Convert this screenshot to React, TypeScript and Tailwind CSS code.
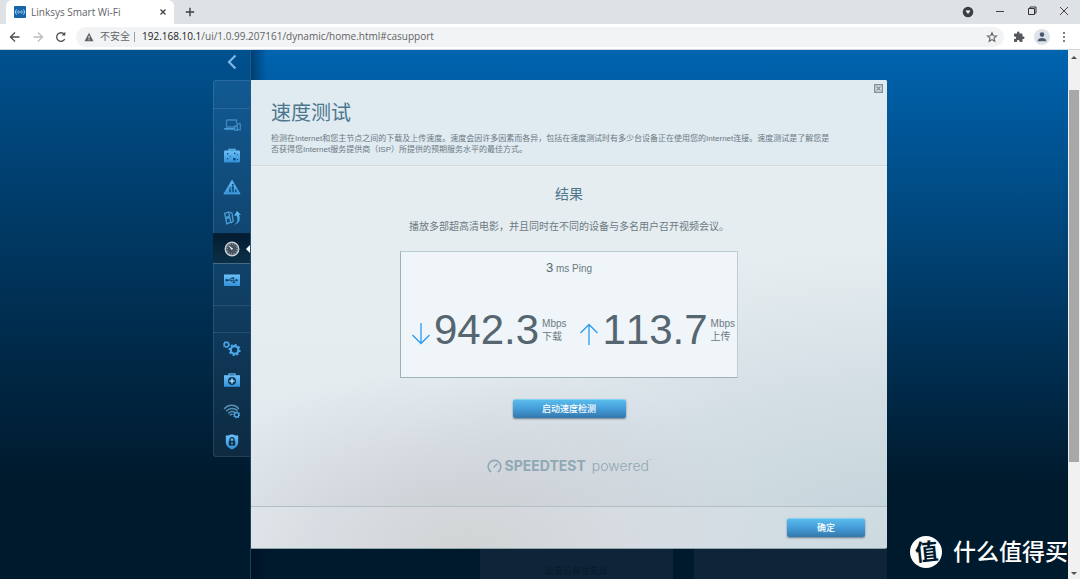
import type { ReactNode } from "react";

const cjk = "font-['Liberation_Sans','Noto_Sans_CJK_SC',sans-serif]";
const chromeFont = "font-['Open_Sans','Noto_Sans_CJK_SC',sans-serif]";

function Icon({ children }: { children: ReactNode }) {
  return (
    <svg
      viewBox="0 0 18 18"
      className="size-[18px] overflow-visible"
      fill="url(#iconBlue)"
      aria-hidden="true"
    >
      {children}
    </svg>
  );
}

function Gear({ cx, cy, r }: { cx: number; cy: number; r: number }) {
  return (
    <g fill="none" stroke="#4ba8e8">
      <circle cx={cx} cy={cy} r={r} strokeWidth={r * 0.6} />
      <circle
        cx={cx}
        cy={cy}
        r={r * 1.35}
        strokeWidth={r * 0.5}
        pathLength={16}
        strokeDasharray="1 1"
      />
    </g>
  );
}

const icons = {
  devices: (
    <Icon>
      <path
        d="M3.5 4h10v3M3.5 4v7H12"
        fill="none"
        stroke="#3f86bd"
        strokeWidth="1.4"
      />
      <path d="M.5 12h11v1.8H1.800z" fill="#4d9bd6" />
      <rect x="11.8" y="10" width="2.6" height="4.2" fill="#0e5289" stroke="#4d9bd6" />
      <rect x="14.2" y="7.8" width="3" height="6" fill="#0e5289" stroke="#4d9bd6" />
    </Icon>
  ),
  guest: (
    <Icon>
      <path d="M6 4V2.5h6V4" fill="none" stroke="#58b2ee" strokeWidth="1.4" />
      <rect x="1" y="3.6" width="16" height="11.8" rx="1" />
      <g fill="#0d4878">
        <rect x="4" y="6" width="1.4" height="1.4" />
        <rect x="6.6" y="8.8" width="1" height="1" />
        <rect x="11" y="5.6" width="1.4" height="1.4" />
        <rect x="13.8" y="7.2" width="1" height="1" />
        <rect x="4" y="11" width="1.2" height="1.2" />
        <rect x="10.2" y="11" width="2.4" height="2.4" />
        <rect x="14" y="12" width="1" height="1" />
      </g>
    </Icon>
  ),
  parental: (
    <Icon>
      <path d="M9 2l8.2 14H.8z" stroke="#58b2ee" strokeLinejoin="round" strokeWidth=".6" />
      <g fill="#0d4878">
        <circle cx="9.8" cy="6.8" r="1" />
        <path d="M8.8 8.2h2v6h-.8v-3h-.4v3h-.8z" />
        <circle cx="7" cy="9.8" r=".8" />
        <path d="M6.2 11h1.5v3.2H6.2zM12 11.4h1.4v2.8H12z" />
      </g>
    </Icon>
  ),
  priority: (
    <Icon>
      <g fill="none" stroke="#4d9fd8" strokeWidth="1.3">
        <path d="M1.6 4.4l4-1.4 1 4.2-4 1.4zM2.8 10l4-1.4 1 4.6-4 1.6z" />
        <path d="M6.4 3l2.6 1.2 1.2 8L7.8 14" />
      </g>
      <path d="M10.4 15.800c5-1.800 4.200-6 3.400-9.200l-2.800.4L14 2l4 4-2-.2c1.600 4.800 1 9-5.600 10z" />
    </Icon>
  ),
  speed: (
    <Icon>
      <circle cx="9" cy="9" r="6.7" fill="#46535e" stroke="#c9d0d4" strokeWidth="1.5" />
      <circle
        cx="9"
        cy="9"
        r="4.8"
        fill="none"
        stroke="#c9d0d4"
        strokeWidth="1"
        pathLength={24}
        strokeDasharray=".6 1.4"
      />
      <path d="M5.2 5l4.800 3.800-1.200 1.200z" fill="#fff" />
    </Icon>
  ),
  usb: (
    <Icon>
      <rect x="1" y="3.5" width="16" height="11.5" />
      <g stroke="#0d3c63" strokeWidth=".9" fill="none">
        <path d="M3.5 9.2h10M6 9.2l2-2h2M7.5 9.2l2 2h1.8" />
      </g>
      <g fill="#0d3c63">
        <circle cx="3.8" cy="9.2" r="1.2" />
        <path d="M13 7.8l2.4 1.4L13 10.6z" />
        <circle cx="10.4" cy="7.2" r=".9" />
        <rect x="10.6" y="10.4" width="1.6" height="1.6" />
      </g>
    </Icon>
  ),
  connectivity: (
    <Icon>
      <Gear cx={3.4} cy={4.6} r={2.2} />
      <Gear cx={11.6} cy={10} r={3.8} />
    </Icon>
  ),
  troubleshooting: (
    <Icon>
      <path d="M6 4.5V2.8h6v1.700" fill="none" stroke="#58b2ee" strokeWidth="1.3" />
      <path d="M1 4.2h16v11.600H1z" />
      <circle cx="9" cy="10" r="4" fill="#0f3a5c" />
      <path d="M8.2 7.5h1.6v1.7h1.7v1.6H9.8v1.7H8.2v-1.7H6.5V9.2h1.7z" fill="#a5dcff" />
    </Icon>
  ),
  wireless: (
    <Icon>
      <g fill="none" stroke="#5790b5" strokeWidth="1.5" strokeLinecap="round">
        <path d="M1.5 6.4c4-4.2 10.5-4.2 14 0M3.6 8.8c3-3 7.5-3 10.4-.6M5.7 11c1.7-1.7 4-1.8 5.6-1" />
        <path d="M7.4 12.8l1.6-.6" />
      </g>
      <Gear cx={13.6} cy={12.8} r={2.2} />
    </Icon>
  ),
  security: (
    <Icon>
      <path d="M2.8 2.500c4 .2 4-1 6.2-1s2.2 1.2 6.2 1v6.500c0 4-3 6-6.2 7.500C5.800 15 2.8 13 2.8 9z" />
      <path d="M7 8V6.6a2 2 0 014 0V8" fill="none" stroke="#0f304b" strokeWidth="1.2" />
      <rect x="5.8" y="7.8" width="6.4" height="4.800" fill="#0f304b" />
      <rect x="8.4" y="9.2" width="1.2" height="2" fill="#6fbdf0" />
    </Icon>
  ),
};

const appItems = [
  { label: "设备列表", icon: icons.devices },
  { label: "访客网络", icon: icons.guest },
  { label: "家长控制", icon: icons.parental },
  { label: "设备优先级", icon: icons.priority },
  { label: "速度测试", icon: icons.speed, active: true },
  { label: "外部存储", icon: icons.usb },
];

const settingItems = [
  { label: "连接", icon: icons.connectivity },
  { label: "故障排除", icon: icons.troubleshooting },
  { label: "无线", icon: icons.wireless },
  { label: "安全", icon: icons.security },
];

function NavButton({ label, icon, active }: { label: string; icon: ReactNode; active?: boolean }) {
  return (
    <button
      aria-label={label}
      className={
        active
          ? "relative flex h-[31px] w-full items-center justify-center border-y border-t-[#03233d] border-b-[#456b86] bg-linear-to-b from-[#041c30] to-[#0b3048]"
          : "flex h-[31px] w-full items-center justify-center"
      }
    >
      {icon}
      {active && (
        <span className="absolute right-0 border-y-4 border-r-4 border-y-transparent border-r-white" />
      )}
    </button>
  );
}

function Sidebar() {
  return (
    <aside className="flex w-[251px] shrink-0 flex-col items-end border-r border-[#2b618a]/60 bg-linear-to-b from-[#00518f] to-[#001a2d] to-[430px]">
      <button aria-label="返回" className="flex h-[30px] w-[37px] items-center justify-center pb-[6px]">
        <svg viewBox="0 0 10 16" className="h-4 w-2.5" fill="none">
          <path d="M8.5 1.5L2 8l6.5 6.5" stroke="#7cb9e8" strokeWidth="2.2" />
        </svg>
      </button>
      <nav className="w-[37px] rounded-l-sm bg-linear-to-b from-[#115a93] to-[#0d2a41] shadow-[inset_1px_0_0_rgba(255,255,255,0.1),inset_0_1px_0_rgba(255,255,255,0.1),inset_0_-1px_0_rgba(255,255,255,0.1)]">
        <div className="h-[29px] border-b border-white/10" />
        <div className="border-b border-white/10 pb-[10px]">
          {appItems.map((item) => (
            <NavButton key={item.label} {...item} />
          ))}
        </div>
        <div className="h-[27px] border-b border-white/10" />
        {settingItems.map((item) => (
          <NavButton key={item.label} {...item} />
        ))}
      </nav>
    </aside>
  );
}

function BrowserChrome() {
  return (
    <header className={`${chromeFont} text-[10px] text-[#5f6368]`}>
      <div className="flex h-6 items-center bg-[#dee1e6] pl-[6px]">
        <div className="flex h-full w-[168px] items-center rounded-t-md bg-white pr-[7px] pl-2">
          <svg viewBox="0 0 12 12" className="size-3">
            <rect width="12" height="12" rx="1" fill="#1766ab" />
            <g stroke="#bfe3ff" fill="none">
              <path d="M2.5 3.5C1.3 5 1.3 7 2.5 8.5M4.5 4.5c-.8 1-.8 2 0 3M7.5 4.5c.8 1 .8 2 0 3M9.5 3.5c1.2 1.5 1.2 3.5 0 5" />
            </g>
            <circle cx="6" cy="6" r=".8" fill="#bfe3ff" />
          </svg>
          <span className="ml-[5px] flex-1 whitespace-nowrap">Linksys Smart Wi-Fi</span>
          <button aria-label="关闭标签页">
            <svg viewBox="0 0 8 8" className="size-2" stroke="#3c4043" strokeWidth="1.3">
              <path d="M1.500 1.500l5 5M6.500 1.500l-5 5" />
            </svg>
          </button>
        </div>
        <button aria-label="新标签页" className="ml-[11px]">
          <svg viewBox="0 0 10 10" className="size-[10px]" stroke="#3c4043" strokeWidth="1.4">
            <path d="M5 .8v8.400M.8 5h8.400" />
          </svg>
        </button>
        <div className="ml-auto flex items-center gap-5 pr-[10px]">
          <button aria-label="搜索标签页">
            <svg viewBox="0 0 12 12" className="size-3">
              <circle cx="6" cy="6" r="5.3" fill="#3c4043" />
              <path d="M3.5 4.5h5L6 8z" fill="#fff" />
            </svg>
          </button>
          <button aria-label="最小化" className="pb-[3px]">
            <svg viewBox="0 0 12 12" className="size-3" stroke="#444">
              <path d="M2 6.5h8" />
            </svg>
          </button>
          <button aria-label="还原" className="pb-[3px]">
            <svg viewBox="0 0 12 12" className="size-3" fill="none" stroke="#333">
              <path d="M2.5 3.5h6v6h-6zM4 3.500v-1.500h6v6H8.500" />
            </svg>
          </button>
          <button aria-label="关闭" className="pb-[3px]">
            <svg viewBox="0 0 12 12" className="size-3" stroke="#444">
              <path d="M2 2l8 8M10 2l-8 8" />
            </svg>
          </button>
        </div>
      </div>
      <div className="flex h-[26px] items-center border-b border-[#cfd6dc] bg-white pr-[10px] pl-[9px]">
        <button aria-label="后退">
          <svg viewBox="0 0 12 12" className="size-3" fill="none" stroke="#4b4f53" strokeWidth="1.3">
            <path d="M10.5 6h-9M6 1.5L1.5 6 6 10.5" />
          </svg>
        </button>
        <button aria-label="前进" className="ml-[11px]">
          <svg viewBox="0 0 12 12" className="size-3" fill="none" stroke="#babcbe" strokeWidth="1.3">
            <path d="M1.5 6h9M6 1.5L10.5 6 6 10.5" />
          </svg>
        </button>
        <button aria-label="重新加载" className="ml-[11px]">
          <svg viewBox="0 0 12 12" className="size-3" fill="none" stroke="#4b4f53" strokeWidth="1.3">
            <path d="M9.7 8.2A4.3 4.3 0 119.3 3.3" />
            <path d="M10.3.8v3.7H6.6z" fill="#4b4f53" stroke="none" />
          </svg>
        </button>
        <div className="ml-[9px] flex h-5 flex-1 items-center rounded-full bg-[#f1f3f4] pr-[6px] pl-2">
          <svg viewBox="0 0 10 10" className="size-[10px]">
            <path d="M5 .8l4.500 8.400h-9z" fill="#5f6368" />
            <path d="M5 3.8v2.600M5 7.200v1" stroke="#f1f3f4" />
          </svg>
          <span className="ml-[6px] whitespace-nowrap">不安全</span>
          <span className="mr-[7px] ml-1 h-[10px] w-px bg-[#9aa0a6]" />
          <label htmlFor="address" className="text-[#202124]">
            192.168.10.1
          </label>
          <input
            id="address"
            className="min-w-0 flex-1 bg-transparent outline-none"
            defaultValue="/ui/1.0.99.207161/dynamic/home.html#casupport"
          />
          <button aria-label="收藏">
            <svg viewBox="0 0 24 24" className="size-3" fill="none" stroke="#5f6368" strokeWidth="2.2">
              <path d="M12 3.500l2.500 5.900 6.500.6-4.900 4.200 1.500 6.300L12 17.200l-5.600 3.300 1.500-6.300L3 10l6.500-.6z" />
            </svg>
          </button>
        </div>
        <button aria-label="扩展程序" className="ml-[9px]">
          <svg viewBox="0 0 24 24" className="size-3" fill="#55595d">
            <path d="M20.5 11H19V7c0-1.100-.9-2-2-2h-4V3.500a2.500 2.500 0 00-5 0V5H4c-1.100 0-2 .9-2 2v3.800h1.500a2.700 2.700 0 010 5.400H2V20c0 1.100.9 2 2 2h3.800v-1.500a2.700 2.700 0 015.400 0V22H17c1.100 0 2-.9 2-2v-4h1.500a2.500 2.500 0 000-5z" />
          </svg>
        </button>
        <button aria-label="个人资料" className="ml-[9px]">
          <svg viewBox="0 0 16 16" className="size-4">
            <circle cx="8" cy="8" r="8" fill="#dde2e8" />
            <circle cx="8" cy="5.6" r="2.3" fill="#4a5a72" />
            <path d="M3.6 12.300c0-4.400 8.800-4.400 8.800 0z" fill="#4a5a72" />
          </svg>
        </button>
        <button aria-label="菜单" className="ml-2">
          <svg viewBox="0 0 12 12" className="size-3" fill="#5f6368">
            <circle cx="6" cy="2" r="1.1" />
            <circle cx="6" cy="6" r="1.1" />
            <circle cx="6" cy="10" r="1.1" />
          </svg>
        </button>
      </div>
    </header>
  );
}

function ActionButton({ children, className }: { children: ReactNode; className: string }) {
  return (
    <button
      className={`${className} h-[19px] rounded-xs border-t border-[#83d3f6] bg-linear-to-b from-[#5bbcec] via-[#439bd8] to-[#3478ac] text-[9px] leading-none font-medium text-white shadow-[0_1px_2px_rgba(40,60,80,0.6)]`}
    >
      {children}
    </button>
  );
}

function Result({ up, value, label }: { up?: boolean; value: string; label: string }) {
  return (
    <div className="flex items-center">
      <svg viewBox="0 0 18 22" className="mt-2 h-[22px] w-[18px]" fill="none" stroke="#2a9bf0" strokeWidth="1.3">
        {up ? <path d="M9 22V1.500M.5 10L9 1.500l8.500 8.500" /> : <path d="M9 0v20.500M.5 12L9 20.500l8.500-8.500" />}
      </svg>
      <span className="ml-1 text-[42px] leading-[42px] text-[#566670] [font-kerning:none]">{value}</span>
      <span className="ml-[3px] text-[10px] leading-[13px] whitespace-nowrap">
        Mbps
        <br />
        {label}
      </span>
    </div>
  );
}

function SpeedTestDialog() {
  return (
    <section
      role="dialog"
      aria-labelledby="dialog-title"
      className="w-full max-w-[636px] overflow-hidden rounded-r-xs border-b border-[#8fa3ab] bg-[radial-gradient(ellipse_320px_180px_at_34%_100%,#c9cdce_0%,rgba(205,210,216,0.75)_45%,rgba(215,222,230,0)_100%),radial-gradient(ellipse_520px_300px_at_100%_100%,#c3d4da_0%,rgba(206,218,225,0.8)_50%,rgba(220,228,234,0)_100%),linear-gradient(to_bottom,#e6edf0_50%,#e1e8ee)] text-[#6b7983]"
    >
      <header className="relative border-b border-[#d0dade] bg-[#dfeaf1] pt-[22px] pb-[10px] pl-5">
        <h1 id="dialog-title" className="text-[20px] leading-[22px] text-[#4d778d]">
          速度测试
        </h1>
        <p className="mt-[9px] text-[8px] leading-[11px] whitespace-nowrap">
          检测在Internet和您主节点之间的下载及上传速度。速度会因许多因素而各异，包括在速度测试时有多少台设备正在使用您的Internet连接。速度测试是了解您是
          <br />
          否获得您Internet服务提供商（ISP）所提供的预期服务水平的最佳方式。
        </p>
        <button aria-label="关闭" className="absolute top-1 right-1">
          <svg viewBox="0 0 9 9" className="size-[9px]" fill="none" stroke="#80929c">
            <rect x=".7" y=".7" width="7.6" height="7.6" strokeWidth="1.4" />
            <path d="M2.5 2.5l4 4M6.5 2.5l-4 4" strokeWidth="1.4" />
          </svg>
        </button>
      </header>
      <div className="flex flex-col items-center border-t border-white/30 pt-[17px] pb-8">
        <h2 className="text-[14px] leading-5 text-[#4d778d]">结果</h2>
        <p className="mt-[15px] text-[10px] leading-4">
          播放多部超高清电影，并且同时在不同的设备与多名用户召开视频会议。
        </p>
        <div className="mt-4 w-[338px] border border-t-[#bccdd1] border-r-[#bccdd1] border-b-[#9db1b8] border-l-[#9db1b8] bg-[#eff5f8] pt-2 pb-[26px]">
          <p className="text-center text-[10px] leading-4">
            <span className="text-[13px] text-[#566670]">3</span> ms Ping
          </p>
          <div className="mt-8 flex justify-between pr-[2px] pl-[11px]">
            <Result value="942.3" label="下载" />
            <Result up value="113.7" label="上传" />
          </div>
        </div>
        <ActionButton className="mt-[21px] w-[113px]">启动速度检测</ActionButton>
        <div className="mt-10 flex items-center font-['Inter',sans-serif] text-[14px] leading-4 text-[#8fa8b4]">
          <svg viewBox="0 0 15 14" className="h-[14px] w-[15px]" fill="none" stroke="#8fa8b4" strokeWidth="1.6">
            <path d="M4.2 13a6.3 6.3 0 116.600 0M6.500 8.500l4-4" />
          </svg>
          <span className="ml-[3px] font-bold">SPEEDTEST</span>
          <span className="ml-[6px] font-light">powered</span>
          <span className="self-start text-[4px] leading-[6px]">™</span>
        </div>
      </div>
      <footer className="flex justify-end border-t border-[#b3bfc5] bg-white/15 pt-[11px] pr-[22px] pb-[11px]">
        <ActionButton className="w-[78px]">确定</ActionButton>
      </footer>
    </section>
  );
}

function Scrollbar() {
  return (
    <div className="flex w-3 shrink-0 flex-col items-center bg-[#f1f1f1] py-1">
      <span className="mt-[2px] border-x-[3px] border-b-[3px] border-x-transparent border-b-[#505050]" />
      <div className="mt-[31px] w-[10px] grow-[370] bg-[#a8a8a8]" />
      <div className="grow-[110]" />
      <span className="border-x-[3px] border-t-[3px] border-x-transparent border-t-[#505050]" />
    </div>
  );
}

function Watermark() {
  return (
    <div className="absolute right-3 bottom-[11px] flex items-center gap-[11px] text-[23px] leading-8 font-medium text-white">
      <span className="flex size-8 items-center justify-center rounded-full bg-white text-[#001a2d]">
        <span className="-rotate-6 font-bold">值</span>
      </span>
      <span className="whitespace-nowrap">什么值得买</span>
    </div>
  );
}

export default function App() {
  return (
    <div lang="zh-CN" className={`${cjk} relative flex min-h-screen flex-col overflow-hidden`}>
      <svg className="absolute size-0" aria-hidden="true">
        <linearGradient id="iconBlue" x1="0" y1="0" x2="0" y2="1">
          <stop offset="0" stopColor="#6cc0f6" />
          <stop offset="1" stopColor="#3292d8" />
        </linearGradient>
      </svg>
      <BrowserChrome />
      <div className="flex flex-1">
        <Sidebar />
        <main className="flex min-w-0 flex-1 flex-col bg-[linear-gradient(to_right,rgba(0,10,25,0.4),transparent_16px),linear-gradient(to_bottom,#0064b0,#001a2d_430px)] pt-[30px]">
          <SpeedTestDialog />
          {/* Widgets dimmed under the dialog */}
          <div className="flex w-full max-w-[636px] flex-1 justify-end gap-[21px] text-[9px] leading-[11px] text-[#081a2a]">
            <div className="w-[193px] bg-[#0e2539] pt-[17px] text-center">设置设备优先级</div>
            <div className="w-[193px] bg-[#0e2539]" />
          </div>
        </main>
        <Scrollbar />
      </div>
      <Watermark />
    </div>
  );
}
